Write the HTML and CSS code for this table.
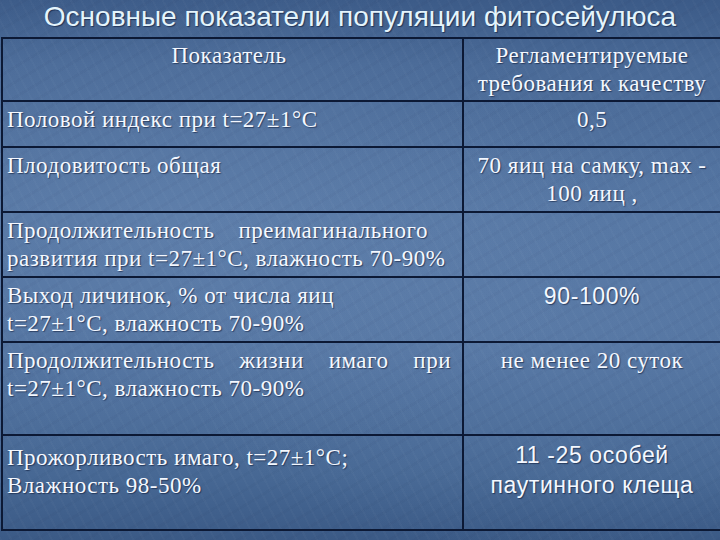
FILE: index.html
```html
<!DOCTYPE html>
<html lang="ru">
<head>
<meta charset="utf-8">
<title>Основные показатели популяции фитосейулюса</title>
<link rel="stylesheet" href="styles.css">
</head>
<body>
<div class="slide">
  <h1 class="title">Основные показатели популяции фитосейулюса</h1>
  <div class="grid">
    <div class="cell left head r0">Показатель</div>
    <div class="cell right r0">Регламентируемые<br>требования к качеству</div>

    <div class="cell left r1">Половой индекс при t=27±1°C</div>
    <div class="cell right r1">0,5</div>

    <div class="cell left r2">Плодовитость общая</div>
    <div class="cell right r2">70 яиц на самку, max -<br>100 яиц ,</div>

    <div class="cell left r3">Продолжительность<span class="gap">преимагинального</span><br>развития при t=27±1°C, влажность 70-90%</div>
    <div class="cell right r3"></div>

    <div class="cell left r4">Выход личинок, % от числа яиц<br>t=27±1°C, влажность 70-90%</div>
    <div class="cell right sans r4">90-100%</div>

    <div class="cell left r5">Продолжительность жизни имаго при t=27±1°C, влажность 70-90%</div>
    <div class="cell right r5">не менее 20 суток</div>

    <div class="cell left r6">Прожорливость имаго, t=27±1°C;<br>Влажность 98-50%</div>
    <div class="cell right sans r6">11 -25 особей<br>паутинного клеща</div>
  </div>
</div>
</body>
</html>
```

FILE: styles.css
```css
html, body {
  margin: 0;
  padding: 0;
}

body {
  background: #4a6b97;
}

.slide {
  width: 720px;
  height: 540px;
  overflow: hidden;
  background:
    repeating-linear-gradient(62deg, rgba(255,255,255,0.02) 0 2px, rgba(0,0,0,0) 2px 9px),
    repeating-linear-gradient(-31deg, rgba(0,0,40,0.025) 0 3px, rgba(0,0,0,0) 3px 13px),
    radial-gradient(ellipse at 25% 40%, rgba(130,160,200,0.22), rgba(0,0,0,0) 55%),
    radial-gradient(ellipse at 75% 60%, rgba(130,160,200,0.15), rgba(0,0,0,0) 50%),
    linear-gradient(180deg, #3c5b88 0%, #4a6a97 12%, #5475a2 40%, #5273a0 65%, #476894 88%, #3b5a86 100%);
  font-family: "Liberation Serif", "Times New Roman", serif;
  color: #f4f8ff;
}

.title {
  margin: 0;
  height: 37px;
  font-family: "Liberation Sans", Arial, sans-serif;
  font-weight: normal;
  font-size: 28px;
  line-height: 34px;
  text-align: center;
  color: #e4f4fc;
  text-shadow: 1px 1px 1px rgba(10,20,50,0.6);
}

.grid {
  display: grid;
  grid-template-columns: 461px 262px;
  grid-template-rows: 63px 46px 65px 65px 65px 93px 95px;
  margin-left: 1px;
  border-top: 2px solid #0c1935;
  border-left: 2px solid #0c1935;
  width: 723px;
}

.cell {
  box-sizing: border-box;
  border-bottom: 2px solid #0c1935;
  font-size: 23px;
  letter-spacing: 0.5px;
  line-height: 28px;
  padding-top: 4px;
  text-shadow: 1px 1px 1px rgba(10,20,50,0.55);
}

.left {
  border-right: 2px solid #0c1935;
  padding-left: 4px;
  padding-right: 11px;
  text-align: justify;
}

.left.head {
  text-align: center;
  padding-top: 3px;
}

.right {
  text-align: center;
  padding-right: 6px;
}

.r0.right {
  padding-top: 3px;
}

.r6 {
  padding-top: 8px;
}

.sans {
  font-family: "Liberation Sans", Arial, sans-serif;
  font-size: 23px;
  letter-spacing: 0.6px;
  line-height: 30px;
  padding-top: 3px;
}

.sans.r6 {
  padding-top: 4px;
}

.gap {
  margin-left: 24px;
}
```
